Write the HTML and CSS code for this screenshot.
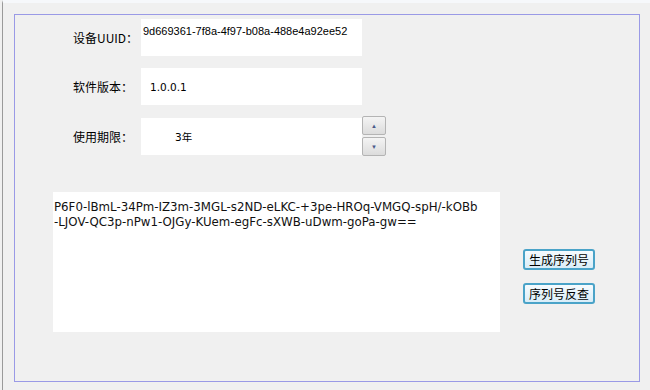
FILE: index.html
```html
<!DOCTYPE html>
<html lang="zh-CN">
<head>
    <meta charset="UTF-8">
    <title>序列号生成</title>
    <link rel="stylesheet" href="styles.css">
</head>
<body>
    <div class="window">
        <div class="panel">
            <div class="form">
                <div class="row">
                    <div class="label">设备UUID：</div>
                    <div class="field field-top">9d669361-7f8a-4f97-b08a-488e4a92ee52</div>
                </div>
                <div class="row">
                    <div class="label">软件版本：</div>
                    <div class="field field-version">1.0.0.1</div>
                </div>
                <div class="row">
                    <div class="label">使用期限：</div>
                    <div class="field field-years">3年</div>
                    <div class="spin">
                        <div class="spin-btn">&#9650;</div>
                        <div class="spin-btn">&#9660;</div>
                    </div>
                </div>
            </div>

            <div class="lower">
                <div class="serial">P6F0-lBmL-34Pm-IZ3m-3MGL-s2ND-eLKC-+3pe-HROq-VMGQ-spH/-kOBb<br>-LJOV-QC3p-nPw1-OJGy-KUem-egFc-sXWB-uDwm-goPa-gw==</div>
                <div class="actions">
                    <button class="button">生成序列号</button>
                    <button class="button">序列号反查</button>
                </div>
            </div>
        </div>
    </div>
</body>
</html>
```

FILE: styles.css
```css
body {
    margin: 0;
    background-color: #f0f0f0;
    font-family: "Liberation Sans", "Noto Sans CJK SC", sans-serif;
    color: #000000;
}

.window {
    width: 650px;
    height: 390px;
    box-sizing: border-box;
    border-left: 1px solid #9a9a9a;
    border-top: 3px solid #f6f8fb;
    margin-left: 2px;
    padding: 11px 0 0 11px;
}

.panel {
    width: 624px;
    height: 366px;
    border: 1px solid #9a9ae6;
}

.form {
    padding: 4px 0 0 58px;
    display: flex;
    flex-direction: column;
    gap: 12px;
}

.row {
    display: flex;
    align-items: center;
}

.label {
    width: 68px;
    font-family: "Noto Sans CJK SC", sans-serif;
    font-size: 12px;
    color: #000000;
}

.field {
    width: 221px;
    height: 37px;
    background-color: #ffffff;
    font-family: "DejaVu Sans", sans-serif;
    font-size: 10.5px;
    display: flex;
    align-items: center;
    box-sizing: border-box;
    white-space: nowrap;
}

.field-top {
    align-items: flex-start;
    padding: 6px 0 0 2px;
    font-family: "Liberation Sans", sans-serif;
    font-size: 11px;
}

.field-version {
    padding-left: 9px;
}

.field-years {
    padding-left: 34px;
    font-family: "DejaVu Sans", "Noto Sans CJK SC", sans-serif;
}

.spin {
    display: flex;
    flex-direction: column;
    gap: 2px;
    margin-top: -1px;
}

.spin-btn {
    width: 22px;
    height: 17px;
    border: 1px solid #b4b4b4;
    border-radius: 2px;
    background: linear-gradient(#f4f4f4, #dcdcdc);
    color: #4a5a8a;
    font-size: 6px;
    display: flex;
    align-items: center;
    justify-content: center;
}

.lower {
    display: flex;
    padding: 36px 0 0 38px;
}

.serial {
    width: 447px;
    height: 140px;
    box-sizing: border-box;
    background-color: #ffffff;
    padding: 8px 0 0 1px;
    font-family: "DejaVu Sans", sans-serif;
    font-size: 11.8px;
    line-height: 15px;
    color: #111111;
}

.actions {
    display: flex;
    flex-direction: column;
    gap: 13px;
    margin: 57px 0 0 23px;
}

.button {
    width: 72px;
    height: 21px;
    padding: 0;
    border: 2px solid #4aa3c8;
    border-radius: 3px;
    background: linear-gradient(#f6fbfe, #d9edf8);
    font-family: "Noto Sans CJK SC", sans-serif;
    font-size: 12px;
    color: #000000;
    line-height: 16px;
}
```
